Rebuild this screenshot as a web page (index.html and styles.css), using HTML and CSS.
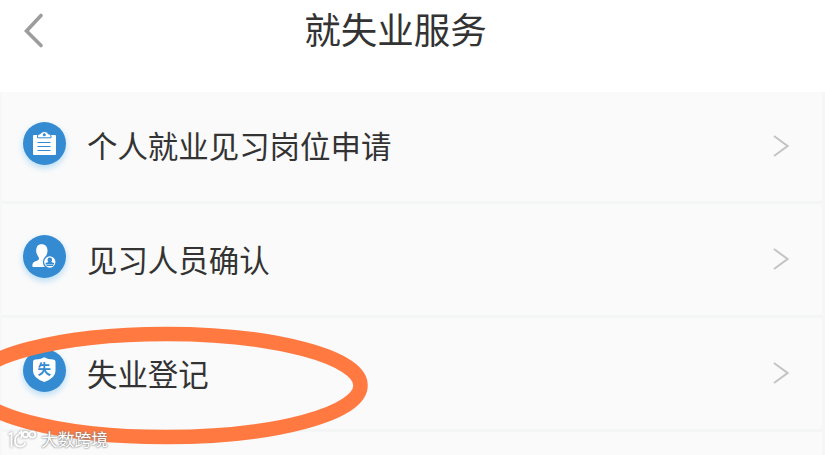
FILE: index.html
```html
<!DOCTYPE html>
<html lang="zh-CN">
<head>
  <meta charset="UTF-8">
  <meta name="viewport" content="width=device-width, initial-scale=1.0">
  <title>就失业服务</title>
  <link rel="stylesheet" href="styles.css">
</head>
<body>
  <header>
    <svg class="back" viewBox="0 0 20 36"><path d="M17 2.5 2.5 18 17 32.5"/></svg>
    <h1>就失业服务</h1>
  </header>
  <main>
    <a class="item">
      <svg class="icon" viewBox="0 0 43 43">
        <path fill="#fff" d="M11 13h21q1 0 1 1v18q0 1-1 1H11q-1 0-1-1V14q0-1 1-1z"/>
        <path fill="#fff" stroke="#358bd2" d="M14.5 15.800V14q0-2 3-2.300Q18 9.500 21.500 9.500T25 11.700q3 .3 3 2.300v1.800z"/>
        <circle cx="21.300" cy="12.700" r="1.500" fill="#358bd2"/>
        <path stroke="#358bd2" stroke-width="1.100" d="M14.500 20.500h13M14.500 24.500h13M14.500 28.500h13"/>
      </svg>
      <span class="label">个人就业见习岗位申请</span>
      <svg class="arrow" viewBox="0 0 16 24"><path d="M1 2 14.500 12 1 22"/></svg>
    </a>
    <a class="item">
      <svg class="icon" viewBox="0 0 43 43">
        <path fill="#fff" d="M18.500 9.300c4 0 6 2.700 6 6.500 0 3-1.300 4.700-2.200 6.200-.7 1.500 0 2.500 1.700 3.300l6 3V32H10.500q-1.300 0-1.200-1.500c.2-2.500 1-3.500 3.200-4.300 2.500-.8 3.500-1.200 3.500-2.700 0-1.800-2.800-3.700-2.800-7.500 0-4 1.500-6.700 5.300-6.700z"/>
        <circle cx="26.800" cy="27" r="6.300" fill="#fff" stroke="#358bd2" stroke-width="1.300"/>
        <path fill="#358bd2" d="M26.800 22.600a2.300 2.300 0 0 1 2.300 2.300q0 1.200-.9 2l2.800 1v1.500h-8.400v-1.500l2.800-1q-.9-.8-.9-2a2.300 2.300 0 0 1 2.300-2.300zM23.500 30h6.600v1h-6.600z"/>
      </svg>
      <span class="label">见习人员确认</span>
      <svg class="arrow" viewBox="0 0 16 24"><path d="M1 2 14.500 12 1 22"/></svg>
    </a>
    <a class="item">
      <svg class="icon" viewBox="0 0 43 43">
        <path fill="#fff" d="M21.300 8.300Q25 10.600 30 10.600q2.500 0 2.500 2.500v9q0 7-11.200 11Q10 29 10 22v-9q0-2.400 2.500-2.400 5 0 8.800-2.300z"/>
        <text x="21.300" y="25" class="badge-text">失</text>
      </svg>
      <span class="label">失业登记</span>
      <svg class="arrow" viewBox="0 0 16 24"><path d="M1 2 14.500 12 1 22"/></svg>
    </a>
  </main>
  <svg class="highlight" viewBox="0 0 380 130"><ellipse cx="166" cy="65.500" rx="194.500" ry="51.500"/></svg>
  <div class="watermark">
    <svg viewBox="0 0 30 20">
      <path d="M1.500 5.500 4.500 4v14.500M12.500 5Q8 7 8 11.500q0 6 5.500 6 3.500 0 5-4M12 4.500l2.500-2v7"/>
      <circle cx="18.500" cy="5.500" r="2.700"/>
      <circle cx="25.300" cy="5.500" r="3"/>
    </svg>
    <span>大数跨境</span>
  </div>
</body>
</html>
```

FILE: styles.css
```css
body {
  font-family: "Noto Sans CJK SC", sans-serif;
  margin: 0;
  height: 455px;
  position: relative;
  overflow: hidden;
  background-color: #fff;
  color: #333;
}

header {
  display: flex;
  align-items: center;
  height: 62px;
  padding: 0 24px 30px;
}

h1 {
  flex: 1;
  margin: 0 54px 4px 0;
  text-align: center;
  font-size: 36.5px;
  font-weight: 400;
  line-height: 58px;
}

svg {
  fill: none;
}

.back {
  width: 20px;
  height: 36px;
  stroke: #9d9d9f;
  stroke-width: 3.6;
  stroke-linecap: round;
}

main {
  box-sizing: border-box;
  height: 363px;
  background-color: #fafafa;
  border-left: 2px solid #f7f7f7;
  border-right: 3px solid #f6f6f6;
}

.item {
  display: flex;
  align-items: center;
  box-sizing: border-box;
  height: 114px;
  padding: 0 33px 4px 21px;
  border-bottom: 3px solid #f4f5f5;
}

.item:first-child {
  height: 112px;
}

.icon {
  width: 43px;
  height: 43px;
  margin-bottom: 3px;
  border-radius: 50%;
  background-color: #358bd2;
  box-shadow: 0 3px 6px rgba(80, 175, 240, 0.4);
}

.badge-text {
  fill: #358bd2;
  font-size: 13.5px;
  font-weight: 700;
  text-anchor: middle;
}

.label {
  flex: 1;
  margin: 1px 0 0 21px;
  font-size: 30.45px;
  line-height: 44px;
}

.item + .item .label {
  margin-top: 3px;
}

.arrow {
  width: 16px;
  height: 24px;
  margin-top: 3px;
  stroke: #c4c4c4;
  stroke-width: 2;
}

.highlight {
  position: absolute;
  left: 0;
  top: 320px;
  width: 380px;
  height: 130px;
  stroke: #ff7940;
  stroke-width: 14.5;
}

.watermark {
  position: absolute;
  left: 7px;
  top: 427px;
  display: flex;
  align-items: center;
  gap: 4px;
  color: #fff;
  font-size: 16.8px;
  line-height: 24px;
  text-shadow: 0 0 2px #777, 0 0 2px #999;
}

.watermark svg {
  width: 30px;
  height: 20px;
  stroke: #fff;
  stroke-width: 1.9;
  filter: drop-shadow(0 0 1px #888);
}
```
